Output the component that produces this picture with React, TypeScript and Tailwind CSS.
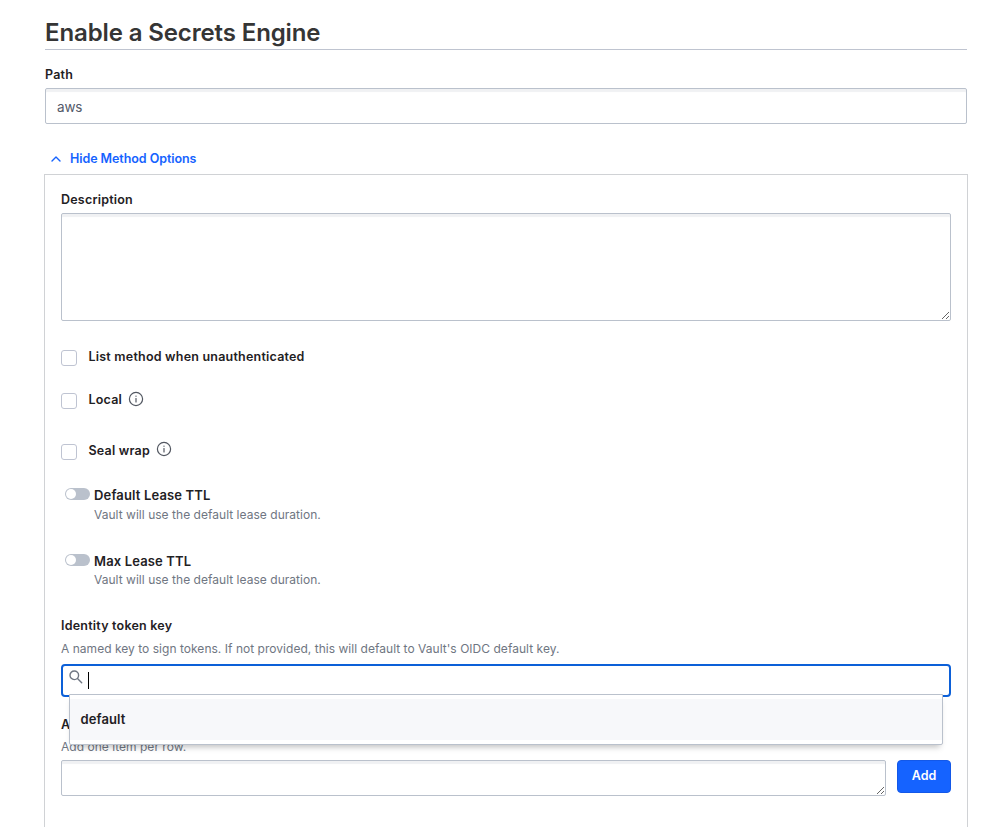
import type { ReactNode } from "react";

const insetTop = "shadow-[inset_0_4px_1px_-1px_#f0f1f3]";

function Label({ children, className = "leading-[22px] text-[12.5px] tracking-[0.21px]" }: { children: ReactNode; className?: string }) {
  return <div className={`h-5 font-semibold text-[#1f2124] whitespace-nowrap ${className}`}>{children}</div>;
}

function Help({ children, className = "" }: { children: ReactNode; className?: string }) {
  return <p className={`text-[12px] leading-5 tracking-[0.03px] text-[#6f7682] whitespace-nowrap ${className}`}>{children}</p>;
}

function Info() {
  return (
    <svg width="16" height="16" viewBox="0 0 16 16" fill="none" stroke="#525761" strokeWidth="1.2" strokeLinecap="round">
      <circle cx="8" cy="8" r="6.6" />
      <path d="M8 7.6v3.3" />
      <path d="M8 5.1v.1" strokeWidth="1.3" />
    </svg>
  );
}

function CheckRow({ label, iconClass, className }: { label: string; iconClass?: string; className: string }) {
  return (
    <div className={`flex h-4 items-start ${className}`}>
      <span className="h-4 w-4 shrink-0 rounded-[3px] border border-[#bfc4d2] bg-white" />
      <div className="-mt-1 ml-[11.5px]"><Label>{label}</Label></div>
      {iconClass && <span className={iconClass}><Info /></span>}
    </div>
  );
}

function ToggleRow({ label, className, helpClass }: { label: string; className: string; helpClass: string }) {
  return (
    <div className={`flex h-10 items-start pl-1 ${className}`}>
      <span className="mt-[3px] flex h-3 w-[25px] shrink-0 rounded-full bg-[#bac1cc] p-px">
        <span className="h-[10px] w-[10px] rounded-full bg-white" />
      </span>
      <div className="ml-1">
        <Label className="text-[13px] leading-5 tracking-[0.15px]">{label}</Label>
        <Help className={helpClass}>Vault will use the default lease duration.</Help>
      </div>
    </div>
  );
}

export default function App() {
  return (
    <div className="h-[827px] w-[996px] overflow-hidden bg-white pl-[44px] pr-7 font-['Inter',sans-serif]">
      <div className="mx-px">
        <h1 className="h-[50px] whitespace-nowrap border-b border-[#bfc4d0] pt-[17px] text-2xl font-semibold leading-8 tracking-[-0.12px] text-[#353535]">Enable a Secrets Engine</h1>
        <div className="mt-[14px]"><Label>Path</Label></div>
        <div className={`mt-1 flex h-9 items-center rounded-[2px] border border-[#bac1cc] pl-[11px] pt-[3px] text-[13.5px] tracking-[-0.15px] text-[#535a69] ${insetTop}`}>aws</div>
      </div>
      <button className="mt-[25px] flex h-5 items-center pl-[7px] text-[12.5px] font-semibold tracking-[-0.07px] text-[#1563ff]">
        <svg width="10" height="6" viewBox="0 0 10 6" fill="none" stroke="currentColor" strokeWidth="1.4" strokeLinecap="round" strokeLinejoin="round"><path d="M1 5l4-4 4 4" /></svg>
        <span className="ml-[9px] whitespace-nowrap">Hide Method Options</span>
      </button>
      <main className="mt-[5px] h-[700px] border border-[#d0d2d5] px-4 pt-[14px]">
        <Label>Description</Label>
        <textarea aria-label="Description" className={`mt-1 block h-[108px] w-full rounded-[2px] border border-[#bac1cc] ${insetTop}`} />
        <CheckRow className="mt-[29px]" label="List method when unauthenticated" />
        <CheckRow className="mt-[27px]" label="Local" iconClass="-mt-[2px] ml-[5.5px]" />
        <CheckRow className="mt-[35px]" label="Seal wrap" iconClass="-mt-[3px] ml-[6.5px]" />
        <ToggleRow className="mt-[25px]" label="Default Lease TTL" helpClass="" />
        <ToggleRow className="mt-[26px]" label="Max Lease TTL" helpClass="-mt-px" />
        <div className="mt-[24px]"><Label>Identity token key</Label></div>
        <Help className="mt-1">A named key to sign tokens. If not provided, this will default to Vault's OIDC default key.</Help>
        <div className="relative mt-[5px] flex h-[33px] rounded-[4px] border-2 border-[#0c60d8] pl-[6px]">
          <svg className="mt-[4px]" width="14" height="14" viewBox="0 0 14 14" fill="none" stroke="#6f7682" strokeWidth="1.4" strokeLinecap="round"><circle cx="5.3" cy="5.3" r="4.3" /><path d="M8.5 8.5l4.2 4.2" /></svg>
          <span className="ml-[5px] mt-[6px] h-[17px] w-px bg-black" />
          <div className="absolute left-[6px] right-[6px] top-[28px] z-10 h-[51px] rounded-b-[2px] border border-[#bac1cc] bg-white py-1 shadow-[0_5px_6px_-3px_rgba(0,0,0,0.25)]">
            <div className="h-[41px] bg-[#f7f8fa] pl-[10.5px] pt-[10px]">
              <Label className="text-[13px] leading-5 tracking-[0.1px]">default</Label>
            </div>
          </div>
        </div>
        <div className="mt-[17px]"><Label>A</Label></div>
        <Help className="mt-[3px]">Add one item per row.</Help>
        <div className="mt-[3px] flex items-start gap-[11px]">
          <textarea aria-label="Item" className={`block h-9 w-[825px] rounded-[2px] border border-[#bac1cc] ${insetTop}`} />
          <button className="h-[33px] w-[54px] rounded-[4px] border border-[#1358e8] bg-[#1563ff] text-[12.5px] font-semibold text-white">Add</button>
        </div>
      </main>
    </div>
  );
}
